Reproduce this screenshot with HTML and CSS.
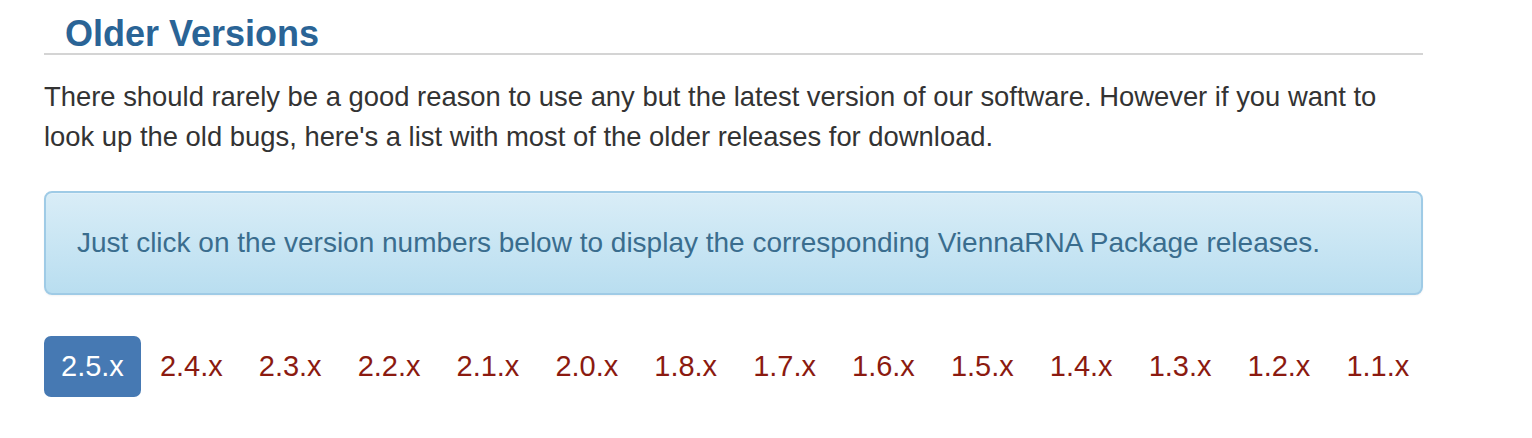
FILE: index.html
```html
<!DOCTYPE html>
<html>
<head>
<meta charset="utf-8">
<link rel="stylesheet" href="styles.css">
</head>
<body>
<div class="container">
  <h2 class="title">Older Versions</h2>
  <p class="intro">There should rarely be a good reason to use any but the latest version of our software. However if you want to look up the old bugs, here's a list with most of the older releases for download.</p>
  <div class="alert">Just click on the version numbers below to display the corresponding ViennaRNA Package releases.</div>
  <ul class="pills">
    <li class="active"><a>2.5.x</a></li>
    <li><a>2.4.x</a></li>
    <li><a>2.3.x</a></li>
    <li><a>2.2.x</a></li>
    <li><a>2.1.x</a></li>
    <li><a>2.0.x</a></li>
    <li><a>1.8.x</a></li>
    <li><a>1.7.x</a></li>
    <li><a>1.6.x</a></li>
    <li><a>1.5.x</a></li>
    <li><a>1.4.x</a></li>
    <li><a>1.3.x</a></li>
    <li><a>1.2.x</a></li>
    <li><a>1.1.x</a></li>
  </ul>
</div>
</body>
</html>
```
FILE: styles.css
```css
html, body {
  margin: 0;
  padding: 0;
  background: #fff;
}
body {
  font-family: "Liberation Sans", Arial, sans-serif;
  color: #333;
}
.container {
  width: 1379px;
  margin-left: 44px;
}
.title {
  margin: 0;
  padding: 14px 0 0 21px;
  height: 39px;
  font-size: 36px;
  line-height: 40px;
  font-weight: bold;
  color: #2a6496;
  border-bottom: 2px solid #d4d4d4;
}
.intro {
  margin: 22px 0 0 0;
  font-size: 27.4px;
  line-height: 40px;
}
.alert {
  margin-top: 34px;
  height: 104px;
  box-sizing: border-box;
  padding: 0 31px;
  display: flex;
  align-items: center;
  font-size: 28px;
  color: #3a6d8e;
  background: linear-gradient(to bottom, #d9edf7 0, #b9def0 100%);
  border: 2px solid #9fcbe6;
  border-radius: 8px;
  box-shadow: inset 0 1px 0 rgba(255,255,255,.25), 0 1px 2px rgba(0,0,0,.05);
}
.pills {
  list-style: none;
  margin: 41px 0 0 0;
  padding: 0;
  display: flex;
  gap: 2px;
}
.pills li a {
  display: block;
  height: 61px;
  box-sizing: border-box;
  padding: 0 17px;
  line-height: 61px;
  font-size: 29px;
  color: #8b1a10;
  border-radius: 7px;
}
.pills li.active a {
  background: #4679b3;
  color: #fff;
}
```
